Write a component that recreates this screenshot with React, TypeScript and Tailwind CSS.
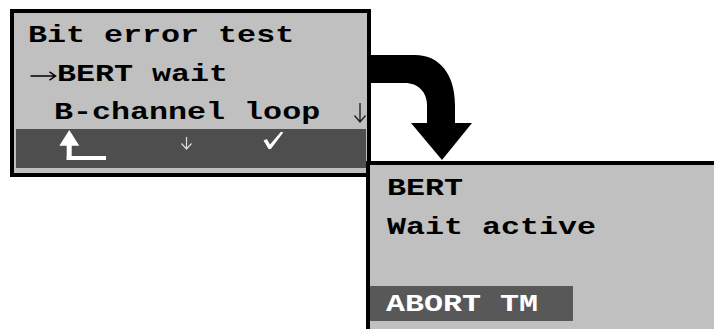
import React from 'react';

const mono = "font-['Liberation_Mono',monospace] font-bold text-[24px] leading-[38.5px]";
const wide = 'inline-block origin-left scale-x-[1.32] whitespace-pre';

const MenuScreen: React.FC = () => (
  <div className="w-[361px] h-[168px] border-4 border-black bg-[#c0c0c0] flex flex-col">
    {/* Menu lines */}
    <div className={`h-[116px] pt-[4px] pl-[14px] text-black ${mono}`}>
      <div>
        <span className={wide}>Bit error test</span>
      </div>
      <div className="flex items-start">
        <svg className="mt-[15.5px] shrink-0" width="29" height="10" viewBox="0 0 29 10">
          <path d="M2.5 5 L27 5 M21.5 0.8 L27.5 5 L21.5 9.2" stroke="#000" strokeWidth="1.5" fill="none" />
        </svg>
        <span className={wide}>BERT wait</span>
      </div>
      <div className="flex items-start">
        <span className="inline-block w-[26px] shrink-0"></span>
        <span className={wide}>B-channel loop</span>
        <svg className="ml-auto mt-[9px]" width="14" height="20" viewBox="0 0 14 20">
          <path d="M7 0 L7 18.5 M1.5 12.5 L7 19 L12.5 12.5" stroke="#222" strokeWidth="1.4" fill="none" />
        </svg>
      </div>
    </div>

    {/* Soft key bar */}
    <div className="ml-[2px] w-[350px] h-[39px] bg-[#4e4e4e]">
      <svg width="350" height="39" viewBox="0 0 350 39">
        {/* back */}
        <polygon points="53.3,1 43.3,16.7 63.3,16.7" fill="#fff" />
        <rect x="50.7" y="16" width="5" height="15" fill="#fff" />
        <rect x="50.7" y="27" width="39.3" height="4" fill="#fff" />
        {/* down */}
        <path d="M170.5 8 L170.5 19.5 M165.5 14.5 L170.5 20 L175.5 14.5" stroke="#ddd" strokeWidth="1.2" fill="none" />
        {/* ok */}
        <polygon points="247.5,11.5 250.8,10 254,15.5 265,2.7 267.3,3.5 254.8,20 252.6,20" fill="#fff" />
      </svg>
    </div>
  </div>
);

const WaitScreen: React.FC = () => (
  <div className="absolute left-[366px] top-[161px] right-0 bottom-0 border-l-4 border-t-4 border-black bg-[#c0c0c0] flex flex-col">
    <div className={`pt-[5px] pl-[17px] text-black ${mono}`}>
      <div>
        <span className={wide}>BERT</span>
      </div>
      <div>
        <span className={wide}>Wait active</span>
      </div>
    </div>
    <div className={`mt-[39px] w-[203px] h-[35px] bg-[#585858] pl-[16px] text-white ${mono} leading-[35px]`}>
      <span className={wide}>ABORT TM</span>
    </div>
  </div>
);

const App: React.FC = () => {
  return (
    <div className="relative w-[714px] h-[329px] bg-white overflow-hidden pt-[9px] pl-[10px]">
      <MenuScreen />

      {/* Transition arrow */}
      <svg className="absolute left-[360px] top-[50px]" width="120" height="115" viewBox="0 0 120 115">
        <path
          d="M8 5 L55 5 C80 5 95 25 95 55 L95 73 L112 73 L82 110 L51 73 L67 73 L67 55 C67 42 58 33 45 33 L8 33 Z"
          fill="#000"
        />
      </svg>

      <WaitScreen />
    </div>
  );
};

export default App;
